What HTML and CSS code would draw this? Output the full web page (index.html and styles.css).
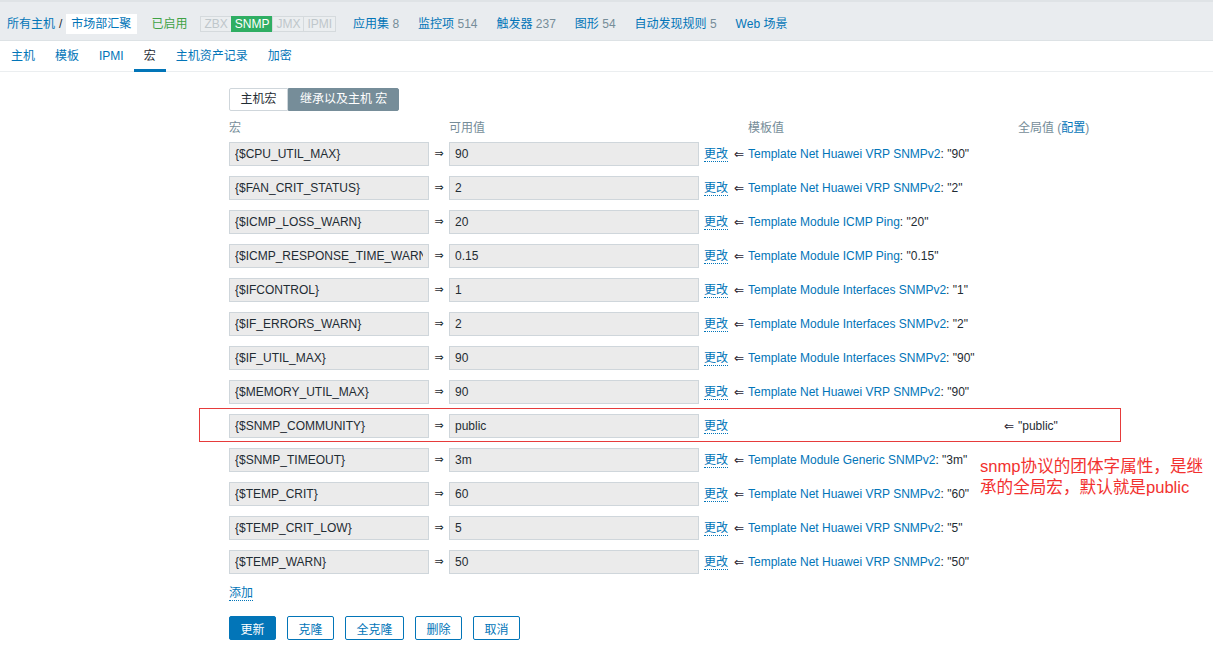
FILE: index.html
```html
<!DOCTYPE html>
<html lang="zh-CN">
<head>
<meta charset="utf-8">
<title>宏</title>
<link rel="stylesheet" href="styles.css">
</head>
<body>
<div class="header">
  <a class="link">所有主机</a><span class="sep">/</span><span class="crumb-current">市场部汇聚</span>
  <span class="enabled">已启用</span>
  <span class="tags"><span class="tag">ZBX</span><span class="tag on">SNMP</span><span class="tag">JMX</span><span class="tag">IPMI</span></span>
  <nav class="nav">
    <a class="link">应用集 <span class="count">8</span></a>
    <a class="link">监控项 <span class="count">514</span></a>
    <a class="link">触发器 <span class="count">237</span></a>
    <a class="link">图形 <span class="count">54</span></a>
    <a class="link">自动发现规则 <span class="count">5</span></a>
    <a class="link">Web 场景</a>
  </nav>
</div>
<div class="tabs">
  <a class="tab">主机</a><a class="tab">模板</a><a class="tab">IPMI</a><a class="tab active">宏</a><a class="tab">主机资产记录</a><a class="tab">加密</a>
</div>
<div class="form">
  <div class="seg"><span class="seg-btn">主机宏</span><span class="seg-btn sel">继承以及主机 宏</span></div>
  <div class="grid head">
    <span>宏</span><span></span><span>可用值</span><span></span><span class="pad">模板值</span><span class="pad">全局值 (<a class="link">配置</a>)</span>
  </div>
  <div class="rows">
    <div class="grid row"><input class="inp" readonly value="{$CPU_UTIL_MAX}"><span class="arr">⇒</span><input class="inp" readonly value="90"><span class="chg"><a class="dotted">更改</a></span><span><span class="larr">⇐</span><a class="link">Template Net Huawei VRP SNMPv2</a>: "90"</span><span></span></div>
    <div class="grid row"><input class="inp" readonly value="{$FAN_CRIT_STATUS}"><span class="arr">⇒</span><input class="inp" readonly value="2"><span class="chg"><a class="dotted">更改</a></span><span><span class="larr">⇐</span><a class="link">Template Net Huawei VRP SNMPv2</a>: "2"</span><span></span></div>
    <div class="grid row"><input class="inp" readonly value="{$ICMP_LOSS_WARN}"><span class="arr">⇒</span><input class="inp" readonly value="20"><span class="chg"><a class="dotted">更改</a></span><span><span class="larr">⇐</span><a class="link">Template Module ICMP Ping</a>: "20"</span><span></span></div>
    <div class="grid row"><input class="inp" readonly value="{$ICMP_RESPONSE_TIME_WARN}"><span class="arr">⇒</span><input class="inp" readonly value="0.15"><span class="chg"><a class="dotted">更改</a></span><span><span class="larr">⇐</span><a class="link">Template Module ICMP Ping</a>: "0.15"</span><span></span></div>
    <div class="grid row"><input class="inp" readonly value="{$IFCONTROL}"><span class="arr">⇒</span><input class="inp" readonly value="1"><span class="chg"><a class="dotted">更改</a></span><span><span class="larr">⇐</span><a class="link">Template Module Interfaces SNMPv2</a>: "1"</span><span></span></div>
    <div class="grid row"><input class="inp" readonly value="{$IF_ERRORS_WARN}"><span class="arr">⇒</span><input class="inp" readonly value="2"><span class="chg"><a class="dotted">更改</a></span><span><span class="larr">⇐</span><a class="link">Template Module Interfaces SNMPv2</a>: "2"</span><span></span></div>
    <div class="grid row"><input class="inp" readonly value="{$IF_UTIL_MAX}"><span class="arr">⇒</span><input class="inp" readonly value="90"><span class="chg"><a class="dotted">更改</a></span><span><span class="larr">⇐</span><a class="link">Template Module Interfaces SNMPv2</a>: "90"</span><span></span></div>
    <div class="grid row"><input class="inp" readonly value="{$MEMORY_UTIL_MAX}"><span class="arr">⇒</span><input class="inp" readonly value="90"><span class="chg"><a class="dotted">更改</a></span><span><span class="larr">⇐</span><a class="link">Template Net Huawei VRP SNMPv2</a>: "90"</span><span></span></div>
    <div class="grid row marked"><input class="inp" readonly value="{$SNMP_COMMUNITY}"><span class="arr">⇒</span><input class="inp" readonly value="public"><span class="chg"><a class="dotted">更改</a></span><span></span><span><span class="larr">⇐</span>"public"</span><span class="redbox"></span><div class="note"><div>snmp协议的团体字属性，是继</div><div>承的全局宏，默认就是public</div></div></div>
    <div class="grid row"><input class="inp" readonly value="{$SNMP_TIMEOUT}"><span class="arr">⇒</span><input class="inp" readonly value="3m"><span class="chg"><a class="dotted">更改</a></span><span><span class="larr">⇐</span><a class="link">Template Module Generic SNMPv2</a>: "3m"</span><span></span></div>
    <div class="grid row"><input class="inp" readonly value="{$TEMP_CRIT}"><span class="arr">⇒</span><input class="inp" readonly value="60"><span class="chg"><a class="dotted">更改</a></span><span><span class="larr">⇐</span><a class="link">Template Net Huawei VRP SNMPv2</a>: "60"</span><span></span></div>
    <div class="grid row"><input class="inp" readonly value="{$TEMP_CRIT_LOW}"><span class="arr">⇒</span><input class="inp" readonly value="5"><span class="chg"><a class="dotted">更改</a></span><span><span class="larr">⇐</span><a class="link">Template Net Huawei VRP SNMPv2</a>: "5"</span><span></span></div>
    <div class="grid row"><input class="inp" readonly value="{$TEMP_WARN}"><span class="arr">⇒</span><input class="inp" readonly value="50"><span class="chg"><a class="dotted">更改</a></span><span><span class="larr">⇐</span><a class="link">Template Net Huawei VRP SNMPv2</a>: "50"</span><span></span></div>
  </div>
  <div class="add"><a class="dotted">添加</a></div>
  <div class="buttons">
    <button class="btn primary">更新</button><button class="btn">克隆</button><button class="btn">全克隆</button><button class="btn">删除</button><button class="btn">取消</button>
  </div>
</div>
</body>
</html>
```
FILE: styles.css
```css
* { box-sizing: border-box; }
html, body { margin: 0; padding: 0; background: #fff; }
body {
  font-family: "Liberation Sans", Arial, "Noto Sans CJK SC", sans-serif;
  font-size: 12px;
  line-height: 14px;
  color: #1f2c33;
  width: 1213px;
  height: 652px;
  overflow: hidden;
}
a { text-decoration: none; cursor: pointer; }
.link { color: #0275b8; }
.count { color: #768d99; }

.header {
  height: 41px;
  background: #e9ecef;
  border-top: 2px solid #dfe3e6;
  border-bottom: 1px solid #dde2e5;
  display: flex;
  align-items: center;
  padding-left: 7px;
  padding-top: 5px;
}
.sep { margin: 0 4px 0 4px; color: #1f2c33; }
.crumb-current {
  background: #fff;
  color: #0275b8;
  height: 20px;
  line-height: 20px;
  padding: 0 6px 0 5px;
}
.enabled { color: #3fa245; margin-left: 14px; }
.tags { display: flex; margin-left: 13px; }
.tag {
  border: 1px solid #d5dadd;
  margin-left: -1px;
  padding: 0 3px;
  height: 16px;
  line-height: 14px;
  color: #bfc7cb;
  background: #ebeef0;
  font-size: 12px;
}
.tag:first-child { margin-left: 0; }
.tag.on { background: #2fae63; border-color: #2fae63; color: #fff; }
.nav { display: flex; gap: 19px; margin-left: 17px; }

.tabs {
  height: 31px;
  border-bottom: 1px solid #ebeef0;
  display: flex;
  align-items: stretch;
  padding-left: 1px;
}
.tab {
  color: #0275b8;
  padding: 2px 10px 0;
  line-height: 26px;
  border-bottom: 3px solid transparent;
  margin-bottom: -1px;
}
.tab.active { color: #1f2c33; border-bottom-color: #0275b8; }

.form { padding-left: 229px; padding-top: 16px; }
.seg { display: flex; height: 23px; }
.seg-btn {
  border: 1px solid #cfd6db;
  line-height: 21px;
  padding: 0 10.5px;
  background: #fff;
  color: #1f2c33;
}
.seg-btn:first-child { border-radius: 2px 0 0 2px; }
.seg-btn.sel { background: #768d99; border-color: #768d99; color: #fff; border-radius: 0 2px 2px 0; padding: 0 11px; }

.grid {
  display: grid;
  grid-template-columns: 200px 20px 250px 35px 270px auto;
  align-items: center;
}
.head { margin-top: 10px; color: #768d99; height: 14px; }
.pad { padding-left: 14px; }
.rows { display: flex; flex-direction: column; gap: 10px; margin-top: 7px; }
.row { height: 24px; position: relative; }
.inp {
  font-family: "Liberation Sans", Arial, "Noto Sans CJK SC", sans-serif;
  font-size: 12px;
  color: #1f2c33;
  background: #ebebeb;
  border: 1px solid #cfd6db;
  height: 24px;
  padding: 0 5px;
  margin: 0;
  outline: none;
  width: 100%;
}
.arr { text-align: center; font-family: "DejaVu Sans", sans-serif; font-size: 11px; color: #1f2c33; }
.larr { display: inline-block; width: 14px; font-family: "DejaVu Sans", sans-serif; font-size: 12px; color: #2b1d33; }
.chg { padding-left: 5px; }
.dotted { color: #0275b8; border-bottom: 1px dotted #0275b8; }
.row > span { white-space: nowrap; }

.redbox {
  position: absolute;
  left: -30px;
  top: -6px;
  width: 922px;
  height: 34px;
  border: 1px solid #e63b3b;
  pointer-events: none;
}
.note {
  position: absolute;
  left: 751px;
  top: 42px;
  font-family: "Liberation Sans", "Noto Sans CJK SC", sans-serif;
  font-size: 16.6px;
  line-height: 21px;
  color: #f2312f;
  white-space: nowrap;
}
.note div { height: 21px; }

.add { margin-top: 12px; height: 14px; }
.buttons { display: flex; gap: 11px; margin-top: 16px; }
.btn {
  font-family: "Liberation Sans", Arial, "Noto Sans CJK SC", sans-serif;
  font-size: 12px;
  height: 24px;
  padding: 0 10.5px;
  border: 1px solid #0275b8;
  border-radius: 2px;
  background: #fff;
  color: #0275b8;
  margin: 0;
}
.btn.primary { background: #0275b8; color: #fff; }
```
